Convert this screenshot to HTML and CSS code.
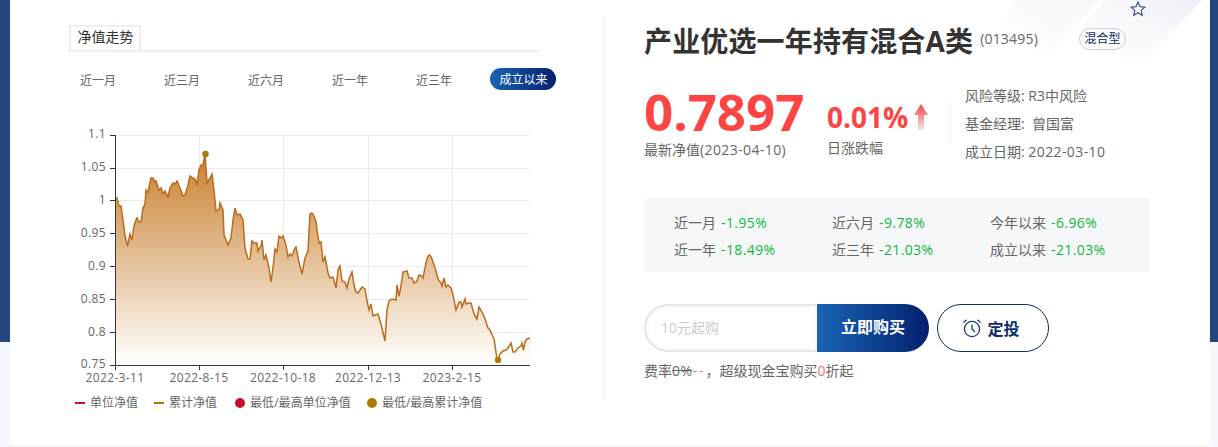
FILE: index.html
```html
<!DOCTYPE html>
<html lang="zh-CN">
<head>
    <meta charset="UTF-8">
    <title>产业优选一年持有混合A类</title>
    <link rel="stylesheet" href="styles.css">
</head>
<body>
    <div class="card">
        <svg class="decor" width="230" height="70" viewBox="0 0 230 70">
            <defs>
                <linearGradient id="decorFade" x1="1" y1="0" x2="0" y2="1">
                    <stop offset="0" stop-color="#eff1f8"/>
                    <stop offset="0.75" stop-color="#ffffff"/>
                </linearGradient>
            </defs>
            <polygon points="30,0 113,0 50,70 0,50" fill="url(#decorFade)" opacity="0.6"/>
            <polygon points="120,0 218,0 150,70 60,70" fill="url(#decorFade)"/>
        </svg>

        <div class="left">
            <div class="tabs"><span class="tab">净值走势</span></div>
            <div class="ranges">
                <span class="range">近一月</span>
                <span class="range">近三月</span>
                <span class="range">近六月</span>
                <span class="range">近一年</span>
                <span class="range">近三年</span>
                <span class="range active">成立以来</span>
            </div>
            <svg class="chart" width="500" height="264" viewBox="60 125 500 264">
                <defs>
                    <linearGradient id="areaFill" gradientUnits="userSpaceOnUse" x1="0" y1="154" x2="0" y2="365">
                        <stop offset="0" stop-color="#c9802f"/>
                        <stop offset="1" stop-color="#ffffff"/>
                    </linearGradient>
                </defs>
                <g class="grid">
                    <path d="M115 135.5H530M115 168.5H530M115 200.5H530M115 233.5H530M115 266.5H530M115 299.5H530M115 332.5H530"/>
                    <path d="M199.5 135V365M283.5 135V365M368.5 135V365M452.5 135V365"/>
                </g>
                <path class="area" d="M115.5 365 L115.5 198 L117 198 119 206 121 206 123 220 125 236 127.5 246 130 234 132 240 134 226 136 220 137 218 139 222 141 222 143 208 145 204 146 190 148 192 151 178 153 178 155 182 156 181 159 190 161 188 163 194 165 191 168 197 170 188 173 183 175 184 177 181 180 188 183 196 185 195 188 185 190 176 193 178 195 179 197 184 199 170 201 165 203 165 205 154 207 183 210 178 212 174 214 190 216 211 219 209 220 203 223 210 224 235 228 245 231 238 233 220 235 208 237 215 240 214 243 220 245 248 248 259 250 259 252 241 254 243 257 243 258 251 261 246 262 240 264 260 266 255 269 268 271 282 273 268 275 249 277 252 279 236 281 238 283 236 286 245 288 257 290 254 292 256 295 248 296 247 299 262 302 274 305 258 308 251 310 214 312 213 314 216 316 222 317 230 319 243 321 242 323 262 325 257 328 273 330 278 333 277 336 288 338 270 340 266 342 281 345 282 347 288 349 279 352 272 354 285 356 292 358 293 362 287 365 289 367 301 369 310 371 304 373 316 375 315 378 314 381 324 385 341 387 310 389 301 392 299 396 300 397 285 399 296 401 286 403 272 407 271 409 278 412 278 414 283 417 281 419 275 422 276 423 278 426 263 428 256 430 255 432 259 436 271 438 279 441 283 442 286 444 278 446 287 448 285 451 288 453 295 456 310 459 302 461 302 462 307 465 299 466 304 469 303 471 303 474 314 477 319 479 307 482 312 485 319 488 328 490 330 493 337 494 339 497 359 498 360 500 354 503 351 506 350 508 348 511 343 513 352 515 352 518 348 521 346 522 343 523.5 350 525 342 527 339 530 338 L530 365 Z"/>
                <polyline class="line" points="115.5,198 117,198 119,206 121,206 123,220 125,236 127.5,246 130,234 132,240 134,226 136,220 137,218 139,222 141,222 143,208 145,204 146,190 148,192 151,178 153,178 155,182 156,181 159,190 161,188 163,194 165,191 168,197 170,188 173,183 175,184 177,181 180,188 183,196 185,195 188,185 190,176 193,178 195,179 197,184 199,170 201,165 203,165 205,154 207,183 210,178 212,174 214,190 216,211 219,209 220,203 223,210 224,235 228,245 231,238 233,220 235,208 237,215 240,214 243,220 245,248 248,259 250,259 252,241 254,243 257,243 258,251 261,246 262,240 264,260 266,255 269,268 271,282 273,268 275,249 277,252 279,236 281,238 283,236 286,245 288,257 290,254 292,256 295,248 296,247 299,262 302,274 305,258 308,251 310,214 312,213 314,216 316,222 317,230 319,243 321,242 323,262 325,257 328,273 330,278 333,277 336,288 338,270 340,266 342,281 345,282 347,288 349,279 352,272 354,285 356,292 358,293 362,287 365,289 367,301 369,310 371,304 373,316 375,315 378,314 381,324 385,341 387,310 389,301 392,299 396,300 397,285 399,296 401,286 403,272 407,271 409,278 412,278 414,283 417,281 419,275 422,276 423,278 426,263 428,256 430,255 432,259 436,271 438,279 441,283 442,286 444,278 446,287 448,285 451,288 453,295 456,310 459,302 461,302 462,307 465,299 466,304 469,303 471,303 474,314 477,319 479,307 482,312 485,319 488,328 490,330 493,337 494,339 497,359 498,360 500,354 503,351 506,350 508,348 511,343 513,352 515,352 518,348 521,346 522,343 523.5,350 525,342 527,339 530,338"/>
                <circle class="dot" cx="205.5" cy="154" r="3.2"/>
                <circle class="dot" cx="498" cy="360" r="3.2"/>
                <path class="axis" d="M115.5 135V365.5M110 135.5H115M110 168.5H115M110 200.5H115M110 233.5H115M110 266.5H115M110 299.5H115M110 332.5H115M110 365.5H530M115.5 365V370M199.5 365V370M283.5 365V370M368.5 365V370M452.5 365V370"/>
                <g class="ylabels">
                    <text x="106" y="138">1.1</text>
                    <text x="106" y="171">1.05</text>
                    <text x="106" y="204">1</text>
                    <text x="106" y="237">0.95</text>
                    <text x="106" y="270">0.9</text>
                    <text x="106" y="303">0.85</text>
                    <text x="106" y="336">0.8</text>
                    <text x="106" y="368">0.75</text>
                </g>
                <g class="xlabels">
                    <text x="115" y="382">2022-3-11</text>
                    <text x="199" y="382">2022-8-15</text>
                    <text x="283" y="382">2022-10-18</text>
                    <text x="368" y="382">2022-12-13</text>
                    <text x="452" y="382">2023-2-15</text>
                </g>
            </svg>
            <div class="legend">
                <span class="legend-item"><i class="dash red"></i>单位净值</span>
                <span class="legend-item"><i class="dash gold"></i>累计净值</span>
                <span class="legend-item wide"><i class="ball red"></i>最低/最高单位净值</span>
                <span class="legend-item"><i class="ball gold"></i>最低/最高累计净值</span>
            </div>
        </div>

        <div class="right">
            <div class="title-row">
                <h1>产业优选一年持有混合A类</h1>
                <span class="code">(013495)</span>
                <span class="type">混合型</span>
                <svg class="star" width="16" height="16" viewBox="0 0 16 16">
                    <path d="M8 1.2 10 5.6 14.8 6.2 11.2 9.4 12.2 14.2 8 11.8 3.8 14.2 4.8 9.4 1.2 6.2 6 5.6Z"/>
                </svg>
            </div>
            <div class="figures">
                <div class="latest">
                    <div class="nav">0.7897</div>
                    <div class="cap">最新净值<span class="num">(2023-04-10)</span></div>
                </div>
                <div class="daily">
                    <div class="pct">0.01%
                        <svg class="up" width="14" height="26" viewBox="0 0 14 26">
                            <defs>
                                <linearGradient id="upFade" x1="0" y1="0" x2="0" y2="1">
                                    <stop offset="0" stop-color="#f0444c"/>
                                    <stop offset="1" stop-color="#fbe3e3"/>
                                </linearGradient>
                            </defs>
                            <path d="M7 0 14 11H10V26H4V11H0Z" fill="url(#upFade)"/>
                        </svg>
                    </div>
                    <div class="cap">日涨跌幅</div>
                </div>
                <div class="info">
                    <p>风险等级: R3中风险</p>
                    <p>基金经理: &nbsp;曾国富</p>
                    <p>成立日期: <span class="num">2022-03-10</span></p>
                </div>
            </div>
            <div class="stats">
                <p>近一月<b>-1.95%</b></p>
                <p>近六月<b>-9.78%</b></p>
                <p>今年以来<b>-6.96%</b></p>
                <p>近一年<b>-18.49%</b></p>
                <p>近三年<b>-21.03%</b></p>
                <p>成立以来<b>-21.03%</b></p>
            </div>
            <div class="actions">
                <div class="amount">10元起购</div>
                <div class="buy">立即购买</div>
                <div class="plan">
                    <svg width="20" height="20" viewBox="0 0 20 20">
                        <circle cx="10" cy="11" r="7.6"/>
                        <path d="M10 6.5V11L13 14M1.5 4.5 4.5 1.8M18.5 4.5 15.5 1.8"/>
                    </svg>
                    定投
                </div>
            </div>
            <p class="fee">费率<s class="num">0%</s><em class="dashes">--</em>，超级现金宝购买<em>0</em>折起</p>
        </div>
    </div>
</body>
</html>
```

FILE: styles.css
```css
*{
    margin: 0;
    padding: 0;
    box-sizing: border-box;
}

body{
    height: 447px;
    overflow: hidden;
    font-family: "Open Sans", "Noto Sans CJK SC", sans-serif;
    font-size: 14px;
    color: #666;
    background: linear-gradient(#25457f, #25457f) top / 100% 342px no-repeat #f6f7fc;
}

.card{
    position: relative;
    display: flex;
    width: 1200px;
    height: 445px;
    margin-left: 10px;
    background-color: #fff;
    overflow: hidden;
}

.decor{
    position: absolute;
    top: 0;
    left: 975px;
}

.num{
    letter-spacing: 0.4px;
}

/* left column */
.left{
    width: 594px;
    height: 386px;
    margin-top: 15px;
    padding: 10px 0 0 59px;
    border-right: 1px solid #f0f0f0;
}
.tabs{
    width: 470px;
    height: 27px;
    border-bottom: 2px solid #efefef;
}
.tab{
    display: block;
    width: 72px;
    height: 27px;
    line-height: 20px;
    padding-left: 1px;
    font-size: 14px;
    text-align: center;
    color: #333;
    border: 2px solid #efefef;
    border-bottom: 0;
}
.ranges{
    display: flex;
    align-items: center;
    height: 22px;
    margin-top: 16px;
    padding-left: 11px;
    font-size: 12px;
}
.range{
    width: 84px;
    flex-shrink: 0;
    padding-top: 1px;
}
.range.active{
    width: 66px;
    height: 22px;
    line-height: 22px;
    margin-left: -10px;
    padding-left: 1px;
    text-align: center;
    color: #fff;
    border-radius: 11px;
    background: linear-gradient(90deg, #1a64b4, #03206f);
}
.chart{
    display: block;
    margin: 35px 0 0 -9px;
}
.chart .grid path{
    fill: none;
    stroke: #ececec;
    stroke-width: 1;
}
.chart .axis{
    fill: none;
    stroke: #333;
    stroke-width: 1;
}
.chart .area{
    fill: url(#areaFill);
}
.chart .line{
    fill: none;
    stroke: #bb6c1c;
    stroke-width: 1.5;
}
.chart .dot{
    fill: #af7a00;
}
.chart text{
    font-size: 12px;
    letter-spacing: 0.35px;
    fill: #666;
}
.ylabels text{
    text-anchor: end;
}
.xlabels text{
    text-anchor: middle;
}
.legend{
    display: flex;
    gap: 16px;
    margin: 6px 0 0 6px;
    font-size: 12px;
    line-height: 16px;
}
.legend-item{
    display: flex;
    align-items: center;
    gap: 5px;
}
.legend-item.wide{
    margin-left: 2px;
    letter-spacing: 0.05px;
}
.dash{
    width: 10px;
    height: 2px;
}
.ball{
    width: 10px;
    height: 10px;
    border-radius: 50%;
}
.red{
    background-color: #c80f2d;
}
.gold{
    background-color: #af7a00;
}

/* right column */
.right{
    position: relative;
    width: 505px;
    margin-left: 40px;
}
.title-row{
    display: flex;
    align-items: center;
    height: 40px;
    margin-top: 20px;
}
h1{
    font-size: 28px;
    font-weight: bold;
    letter-spacing: 0.15px;
    color: #333;
    white-space: nowrap;
}
.code{
    margin: -4px 0 0 7px;
    letter-spacing: 0.2px;
    color: #666;
}
.type{
    width: 47px;
    height: 22px;
    line-height: 20px;
    margin: -2px 0 0 41px;
    font-size: 12px;
    text-align: center;
    color: #0f2a6f;
    border: 1px solid #c9d0e4;
    border-radius: 11px;
}
.star{
    position: absolute;
    top: 1px;
    left: 486px;
    fill: #fff;
    stroke: #3d4f8f;
    stroke-width: 1.2;
}
.figures{
    display: flex;
    align-items: flex-start;
    margin-top: 22px;
}
.latest{
    width: 183px;
    padding-top: 1px;
}
.nav{
    height: 56px;
    font-size: 51px;
    line-height: 56px;
    font-weight: bold;
    color: #ff4444;
}
.cap{
    color: #666;
}
.daily{
    width: 123px;
    padding-top: 20px;
}
.pct{
    display: flex;
    align-items: center;
    gap: 6px;
    height: 30px;
    font-size: 28px;
    font-weight: bold;
    color: #ff4444;
}
.daily .cap{
    margin-top: 5px;
}
.info{
    padding-left: 15px;
    line-height: 28px;
    position: relative;
}
.info p{
    white-space: nowrap;
}
.info::before{
    content: "";
    position: absolute;
    top: 19px;
    left: 0;
    width: 1px;
    height: 40px;
    background-color: #f0f0f0;
}
.stats{
    display: grid;
    grid-template-columns: repeat(3, 158px);
    grid-auto-rows: 27px;
    align-items: center;
    width: 505px;
    height: 74px;
    margin-top: 32px;
    padding: 10px 0 0 30px;
    background-color: #f5f7f9;
}
.stats b{
    margin-left: 5px;
    font-weight: normal;
    letter-spacing: 0.4px;
    color: #12b83b;
}
.actions{
    display: flex;
    align-items: center;
    margin-top: 32px;
}
.amount{
    width: 173px;
    height: 48px;
    line-height: 44px;
    padding-left: 15px;
    color: #ccc;
    border: 2px solid #e6e6e6;
    border-right: 0;
    border-radius: 24px 0 0 24px;
    box-shadow: inset 0 0 4px #f0f0f0;
}
.buy{
    width: 112px;
    height: 48px;
    line-height: 47px;
    text-align: center;
    font-size: 16px;
    font-weight: bold;
    color: #fff;
    border-radius: 0 24px 24px 0;
    background: linear-gradient(90deg, #1a64b4, #03206f);
}
.plan{
    display: flex;
    align-items: center;
    justify-content: center;
    gap: 5px;
    width: 112px;
    height: 48px;
    margin-left: 8px;
    padding-right: 4px;
    font-size: 16px;
    font-weight: bold;
    color: #0f2a6f;
    border: 1px solid #0f2a6f;
    border-radius: 24px;
}
.plan svg{
    fill: none;
    stroke: #1f3a7d;
    stroke-width: 1.3;
}
.fee{
    margin-top: 8px;
    color: #666;
}
.fee em{
    font-style: normal;
    color: #ff6b7a;
}
.fee .dashes{
    letter-spacing: 2px;
}
```
